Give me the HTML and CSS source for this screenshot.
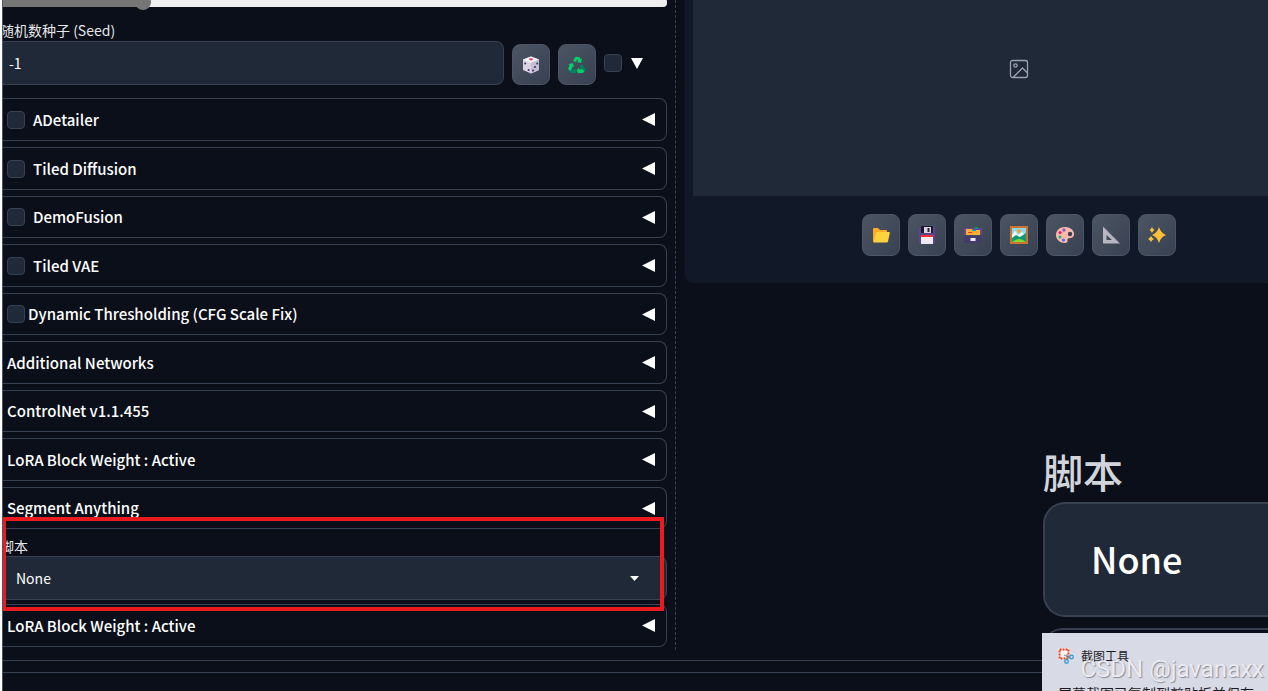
FILE: index.html
```html
<!DOCTYPE html>
<html lang="zh-CN">
<head>
<meta charset="utf-8">
<title>Stable Diffusion</title>
<link rel="stylesheet" href="styles.css">
</head>
<body>
<svg class="defs" aria-hidden="true">
  <symbol id="left" viewBox="0 0 13 13"><path d="M0 6.500 13 0V13z" fill="#fff"/></symbol>
</svg>
<div class="page">
  <main class="columns">
    <section class="settings">
      <input class="slider" type="range" min="0" max="1000" value="203" aria-label="CFG Scale">
      <label class="caption" for="seed">随机数种子 (Seed)</label>
      <div class="seed-row">
        <input class="seed" id="seed" type="text" value="-1">
        <button class="tool seed-tool" aria-label="随机">
          <svg width="18" height="18" viewBox="0 0 18 18"><path d="M9 .5 17 3.500V14L9 17.500 1 14V3.500z" fill="#d9d3e2"/><path d="M9 .5 17 3.500 9 6.800 1 3.500z" fill="#f6f1f8"/><path d="M9 6.800 17 3.500V14L9 17.500z" fill="#c6bdd2"/><ellipse cx="9" cy="3.300" rx="2" ry="1.100" fill="#f03c50"/><g fill="#3f2a68"><circle cx="3.200" cy="7.600" r="1"/><circle cx="6.600" cy="14" r="1"/><circle cx="11" cy="14.400" r="1"/><circle cx="13" cy="11" r="1"/><circle cx="15.200" cy="7.400" r="1"/></g></svg>
        </button>
        <button class="tool seed-tool" aria-label="重用种子">
          <svg width="18" height="18" viewBox="0 0 18 18"><path d="M5 5 7 1.500Q8 .5 10 1L8 6z" fill="#00d26a"/><path d="M8.500 1h2.800l1.400 2.200 1.300-.6-1 4.400-4.200-1 1.300-.8z" fill="#00d26a"/><path d="M14 8.200 17.300 13q.5 1-.4 2l-4-1.200-1-4z" fill="#008463"/><path d="M16.500 15.500 14.500 17H11v1L8.500 14.700 11 11.500v1.800h3.500z" fill="#00d26a"/><path d="M8 13.400V17H3.800Q2 17 1 14.500l2-1.300z" fill="#008463"/><path d="M.3 8.200 4.600 7l1.500 4-1.300-.5L3 14.300 1 14.500.3 12 1.700 9z" fill="#00d26a"/></svg>
        </button>
        <input class="check" type="checkbox" aria-label="额外">
        <svg class="down" width="12" height="11" viewBox="0 0 12 11"><path d="M0 0h12L6 11z" fill="#fff"/></svg>
      </div>

      <div class="accordions">
        <div class="row checked"><label><input class="check" type="checkbox">ADetailer</label><button class="arrow" aria-label="ADetailer"><svg><use href="#left"/></svg></button></div>
        <div class="row checked"><label><input class="check" type="checkbox">Tiled Diffusion</label><button class="arrow" aria-label="Tiled Diffusion"><svg><use href="#left"/></svg></button></div>
        <div class="row"><label><input class="check" type="checkbox">DemoFusion</label><button class="arrow" aria-label="DemoFusion"><svg><use href="#left"/></svg></button></div>
        <div class="row checked"><label><input class="check" type="checkbox">Tiled VAE</label><button class="arrow" aria-label="Tiled VAE"><svg><use href="#left"/></svg></button></div>
        <div class="row tight"><label><input class="check" type="checkbox">Dynamic Thresholding (CFG Scale Fix)</label><button class="arrow" aria-label="Dynamic Thresholding"><svg><use href="#left"/></svg></button></div>
        <button class="row checked">Additional Networks<svg><use href="#left"/></svg></button>
        <button class="row">ControlNet v1.1.455<svg><use href="#left"/></svg></button>
        <button class="row checked">LoRA Block Weight : Active<svg><use href="#left"/></svg></button>
        <button class="row">Segment Anything<svg><use href="#left"/></svg></button>
      </div>

      <div class="script">
        <label class="caption" for="script">脚本</label>
        <div class="select-box">
          <select id="script"><option>None</option></select>
          <svg class="caret" width="9" height="5" viewBox="0 0 9 5"><path d="M0 0h9L4.500 5z" fill="#fff"/></svg>
        </div>
        <div class="highlight"></div>
      </div>
      <button class="row checked">LoRA Block Weight : Active<svg><use href="#left"/></svg></button>
    </section>

    <section class="output">
      <div class="gallery">
        <svg width="20" height="20" viewBox="0 0 20 20" fill="none" stroke="#9ca3af" stroke-width="1.300"><rect x="1.500" y="1.500" width="17" height="17" rx="2"/><circle cx="6.500" cy="6.500" r="1.700"/><path d="M4 18.500 13.500 9l5 5"/></svg>
      </div>
      <div class="tools">
        <button class="tool" aria-label="打开文件夹"><svg width="18" height="18" viewBox="0 0 18 18"><path d="M1 3q0-1 1-1h4l2 2h6q1 0 1 1v3L3 16H1z" fill="#ffa92b"/><path d="M4 7q.3-1 1.300-1h11.700q1 0 .8 1L16 15.500q-.3 1-1.300 1H1.500z" fill="#ffd23e"/></svg></button>
        <button class="tool" aria-label="保存"><svg width="18" height="18" viewBox="0 0 18 18"><path d="M1 1h16v16H1z" fill="#5a4593"/><path d="M3 0h12v7H3z" fill="#24152e"/><path d="M6 1h7v6H6z" fill="#d9d6de"/><path d="M9.500 2h2v4h-2z" fill="#2a2034"/><path d="M3 9h12v9H3z" fill="#eeeaf0"/><path d="M3 9h12v2H3z" fill="#f8312f"/></svg></button>
        <button class="tool" aria-label="压缩保存"><svg width="18" height="18" viewBox="0 0 18 18"><path d="M0 3q0-1 1-1h16q1 0 1 1v6H0z" fill="#6d4398"/><path d="M10 3q1-3 4-2v2z" fill="#009b65"/><path d="M2 3h6l1 1h7v5H2z" fill="#ffb02e"/><path d="M4 6h4v1H4z" fill="#f8312f"/><path d="M8 4h4v1H8z" fill="#00a6ed"/><path d="M0 10h18v7H0z" fill="#433b6b"/><path d="M6.500 12h5v3h-5z" fill="#f3eef8"/></svg></button>
        <button class="tool" aria-label="图生图"><svg width="18" height="18" viewBox="0 0 18 18"><path d="M0 0h18v18H0z" fill="#c8742e"/><path d="M2 2h14v14H2z" fill="#8bd6f7"/><path d="M2 9 5 5l3 4 4-3 4 4v6H2z" fill="#f2fbff"/><path d="m2 12 4-3 4 2 6-4v9H2z" fill="#139673"/><path d="M2 16q7-6 14 0z" fill="#86d72f"/><circle cx="9" cy="5" r="2" fill="#f9a22e"/></svg></button>
        <button class="tool" aria-label="局部重绘"><svg width="18" height="18" viewBox="0 0 18 18"><path d="M9 1c5 0 9 3 9 7 0 3-2 4-4 4s-3 1-2.500 2.500S10.500 17 9 17c-5 0-9-3.500-9-8s4-8 9-8z" fill="#ffb9aa"/><circle cx="14" cy="8" r="2.200" fill="#37404e"/><circle cx="8" cy="4" r="1.700" fill="#8d5bc0"/><circle cx="4" cy="6.500" r="1.600" fill="#e11d74"/><circle cx="4" cy="11" r="1.600" fill="#16b978"/><circle cx="7.500" cy="14" r="1.600" fill="#3f6fff"/></svg></button>
        <button class="tool" aria-label="后期处理"><svg width="18" height="18" viewBox="0 0 18 18"><path d="M1 .5 18 17.500H1zM4.500 9v5H10z" fill="#b9b6bd" fill-rule="evenodd"/><path d="m2 1.500 15 15" stroke="#8269a4" stroke-dasharray="1 1"/></svg></button>
        <button class="tool" aria-label="高清修复"><svg width="18" height="18" viewBox="0 0 18 18" fill="#ffbf37"><path d="M11 1q1.800 6 7 8-5.200 2-7 8-1.800-6-7-8 5.200-2 7-8z"/><path d="M4 1q.8 2.200 2.500 3Q4.800 4.800 4 7 3.200 4.800 1.500 4 3.200 3.200 4 1zM3 10q1 2.200 3 3-2 .8-3 3-1-2.200-3-3 2-.8 3-3z"/></svg></button>
      </div>
    </section>
  </main>
  <footer class="footer"></footer>
</div>

<aside class="magnified">
  <div class="big-caption">脚本</div>
  <div class="big-field">None</div>
  <div class="big-next"></div>
</aside>
<aside class="toast">
  <div class="toast-head">
    <svg width="16" height="16" viewBox="0 0 16 16" fill="none"><rect width="12" height="12" rx="2" fill="#f7f2ef"/><rect x="1.500" y="1.500" width="9" height="9" stroke="#dd4223" stroke-width="2" stroke-dasharray="2 1"/><path d="m6 7 6 3M9 6v6" stroke="#7a8492"/><circle cx="13.500" cy="9" r="1.800" stroke="#279bdd" stroke-width="1.300"/><circle cx="8.500" cy="13.500" r="1.800" stroke="#279bdd" stroke-width="1.300"/></svg>
    <span>截图工具</span>
  </div>
  <p>屏幕截图已复制到剪贴板并保存</p>
</aside>
<div class="watermark">CSDN @javanaxx</div>
</body>
</html>
```
FILE: styles.css
```css
* { box-sizing: border-box; }

html { background: #0b0f19; }

body {
  position: relative;
  min-height: 100vh;
  margin: 0;
  overflow: hidden;
  border-left: 2px solid #fff;
  color: #fff;
  font: 15px/20px "Noto Sans CJK SC", "Noto Sans", sans-serif;
}

button, input, select {
  margin: 0;
  color: inherit;
  font: inherit;
}

.defs {
  position: absolute;
  width: 0;
  height: 0;
}

.page {
  display: flex;
  flex-direction: column;
  width: 106.7%;
  height: 100vh;
  overflow: hidden;
  border-left: 1px solid #4b5563;
}

.columns {
  display: grid;
  grid-template-columns: 673fr 668fr;
  gap: 9px;
  align-items: start;
}

.settings {
  display: flex;
  flex-direction: column;
  padding: 0 8px 3px 0;
  border-right: 1px dashed #374151;
}

.slider {
  appearance: none;
  width: 100%;
  height: 16px;
  margin-top: -6px;
  background: none;
}

.slider::-webkit-slider-runnable-track {
  height: 9px;
  border-radius: 0 4px 4px 0;
  background: linear-gradient(90deg, #767676 21%, #efefef 21%);
}

.slider::-webkit-slider-thumb {
  appearance: none;
  width: 16px;
  height: 16px;
  margin-top: -4px;
  border-radius: 50%;
  background: #767676;
}

.caption {
  margin-left: -3px;
  color: #e5e7eb;
  font-size: 14px;
  line-height: 20px;
}

.slider + .caption { margin-top: 10px; }

.seed-row {
  display: flex;
  align-items: center;
  gap: 8px;
  margin: 1px 0 13px;
}

.seed {
  flex: 1;
  min-width: 0;
  height: 44px;
  padding: 0 6px;
  border: 1px solid #374151;
  border-left: 0;
  border-radius: 0 8px 8px 0;
  background: #1f2937;
  font-size: 14px;
}

.tool {
  display: grid;
  place-items: center;
  width: 38px;
  height: 42px;
  padding: 0;
  border: 1px solid #4b5563;
  border-radius: 8px;
  background: linear-gradient(135deg, #4b5563, #374151);
}

.seed-tool {
  align-self: flex-end;
  height: 41px;
}

.check {
  appearance: none;
  flex: none;
  width: 18px;
  height: 18px;
  border: 1px solid #374151;
  border-radius: 4px;
  background: #1f2937;
}

.down { margin: 0 24px 0 1px; }

.accordions {
  display: flex;
  flex-direction: column;
  gap: 6px;
}

.row {
  display: flex;
  align-items: center;
  justify-content: space-between;
  width: 100%;
  height: 42px;
  padding: 0 11px 0 4px;
  border: 1px solid #374151;
  border-left: 0;
  border-radius: 0 8px 8px 0;
  background: none;
  font-weight: 500;
  text-align: left;
}

.row.checked { height: 43px; }

.row label {
  display: flex;
  align-items: center;
  gap: 8px;
}

.row.tight label { gap: 3px; }

.row svg {
  display: block;
  width: 13px;
  height: 13px;
}

.arrow {
  padding: 0;
  border: 0;
  background: none;
}

.script {
  position: relative;
  display: flex;
  flex-direction: column;
  margin-bottom: 4px;
  padding-top: 7px;
}

.select-box {
  display: grid;
  align-items: center;
}

.select-box > * { grid-area: 1 / 1; }

.select-box select {
  appearance: none;
  width: 100%;
  height: 44px;
  padding: 0 13px;
  border: 1px solid #374151;
  border-left: 0;
  border-radius: 0 8px 8px 0;
  background: #1f2937;
  font-size: 14px;
}

.caret {
  justify-self: end;
  margin-right: 28px;
  pointer-events: none;
}

.highlight {
  position: absolute;
  inset: -12px 3px -11px -1px;
  border: 4px solid #e81c1f;
  pointer-events: none;
}

.output {
  padding: 0 8px 27px;
  border-radius: 0 0 8px 8px;
  background: #111827;
}

.gallery {
  display: grid;
  justify-items: center;
  height: 196px;
  padding-top: 59px;
  background: #1f2937;
}

.tools {
  display: flex;
  justify-content: center;
  gap: 8px;
  padding-top: 18px;
}

.footer {
  height: 13px;
  margin-top: 10px;
  border: solid #374151;
  border-width: 1px 0;
}

.magnified {
  position: absolute;
  top: 452px;
  right: 0;
  width: 225px;
  background: #0b0f19;
}

.big-caption {
  height: 50px;
  color: #d1d5db;
  font-size: 40px;
  font-weight: 500;
  line-height: 38px;
}

.big-field {
  height: 115px;
  padding-left: 46px;
  border: 2px solid #374151;
  border-right: 0;
  border-radius: 22px 0 0 22px;
  background: #1f2937;
  font-size: 36px;
  font-weight: 500;
  line-height: 108px;
}

.big-next {
  height: 20px;
  margin-top: 11px;
  border-top: 2px solid #374151;
  border-radius: 22px 0 0 0;
}

.toast {
  position: absolute;
  top: 633px;
  right: 0;
  width: 226px;
  height: 58px;
  padding: 13px 0 0 16px;
  overflow: hidden;
  background: #d8dae6;
  color: #1b1b1f;
}

.toast-head {
  display: flex;
  align-items: center;
  gap: 7px;
  font-size: 12px;
}

.toast p {
  margin: 17px 0 0;
  font-size: 14px;
  white-space: nowrap;
}

.watermark {
  position: absolute;
  top: 655px;
  right: 4px;
  color: #f0f0f4;
  font: 24px/28px Roboto, "Liberation Sans", sans-serif;
  text-shadow: 1px 1px 1px #777a86;
  opacity: .8;
}
```
